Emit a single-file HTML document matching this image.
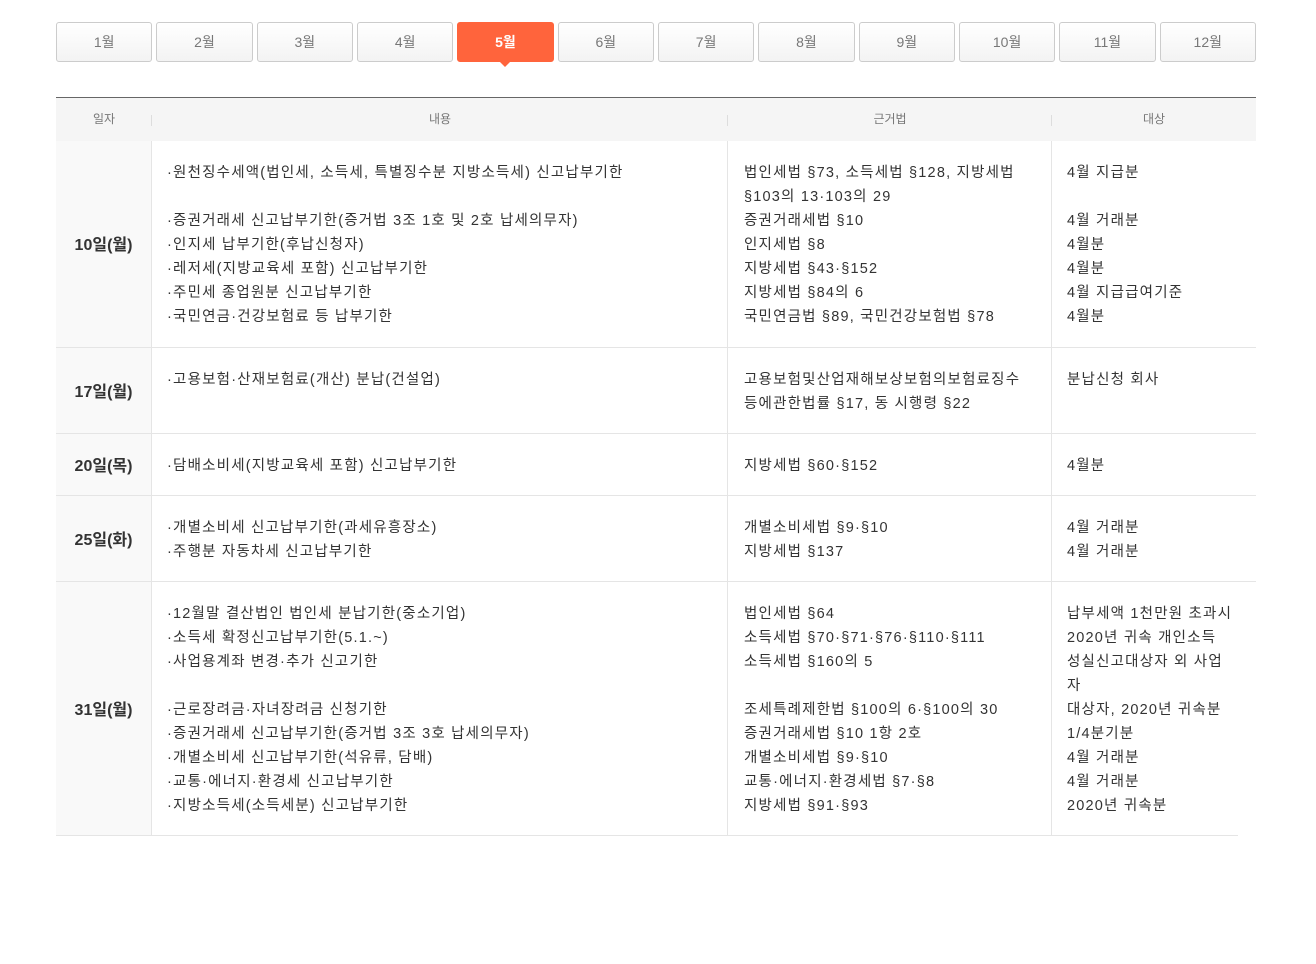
<!DOCTYPE html>
<html><head><meta charset="utf-8"><style>
body{margin:0;background:#fff;font-family:"Liberation Sans","Noto Sans CJK KR",sans-serif;color:#333;}
.tabs{position:absolute;left:56px;top:22px;width:1200px;display:flex;gap:4px;}
.tab{flex:1;border:1px solid #ccc;border-radius:3px;background:linear-gradient(#fff,#f3f3f3);box-sizing:border-box;height:40px;text-align:center;line-height:38px;font-size:14px;color:#777;position:relative;}
.tab.on{background:#ff643c;border-color:#ff643c;color:#fff;font-weight:bold;}
.tab.on:after{content:"";position:absolute;left:50%;margin-left:-6px;bottom:-6px;border-left:6px solid transparent;border-right:6px solid transparent;border-top:6px solid #ff643c;}
.tbl{position:absolute;left:56px;top:97px;width:1200px;border-top:1px solid #666;}
.hd{height:43px;background:#f5f5f5;position:relative;font-size:12px;color:#777;}
.hd div{position:absolute;top:0;line-height:43px;text-align:center;}
.hd i{position:absolute;top:17px;width:1px;height:11px;background:#ddd;}
.row{position:relative;border-bottom:1px solid #e5e5e5;box-sizing:border-box;}
.row>div{position:absolute;top:0;bottom:0;box-sizing:border-box;font-size:14.5px;letter-spacing:1.2px;line-height:24px;padding-top:20px;white-space:nowrap;}
.c1{left:0;width:96px;background:#f9f9f9;font-weight:bold;font-size:16px!important;letter-spacing:0!important;text-align:center;display:flex;align-items:center;justify-content:center;padding-top:4px!important;border-right:1px solid #e5e5e5;}
.c2{left:96px;width:576px;padding-left:15px;border-right:1px solid #e5e5e5;}
.c3{left:672px;width:324px;padding-left:16px;border-right:1px solid #e5e5e5;}
.c4{left:996px;width:204px;padding-left:15px;}
</style></head><body>
<div class="tabs">
<div class="tab">1월</div><div class="tab">2월</div><div class="tab">3월</div><div class="tab">4월</div><div class="tab on">5월</div><div class="tab">6월</div><div class="tab">7월</div><div class="tab">8월</div><div class="tab">9월</div><div class="tab">10월</div><div class="tab">11월</div><div class="tab">12월</div>
</div>
<div class="tbl">
<div class="hd"><div style="left:0;width:96px">일자</div><i style="left:95px"></i><div style="left:96px;width:576px">내용</div><i style="left:671px"></i><div style="left:672px;width:324px">근거법</div><i style="left:995px"></i><div style="left:996px;width:204px">대상</div></div>
<div class="row" style="height:207px">
<div class="c1">10일(월)</div>
<div class="c2">·원천징수세액(법인세, 소득세, 특별징수분 지방소득세) 신고납부기한<br><br>·증권거래세 신고납부기한(증거법 3조 1호 및 2호 납세의무자)<br>·인지세 납부기한(후납신청자)<br>·레저세(지방교육세 포함) 신고납부기한<br>·주민세 종업원분 신고납부기한<br>·국민연금·건강보험료 등 납부기한</div>
<div class="c3">법인세법 §73, 소득세법 §128, 지방세법<br>§103의 13·103의 29<br>증권거래세법 §10<br>인지세법 §8<br>지방세법 §43·§152<br>지방세법 §84의 6<br>국민연금법 §89, 국민건강보험법 §78</div>
<div class="c4">4월 지급분<br><br>4월 거래분<br>4월분<br>4월분<br>4월 지급급여기준<br>4월분</div>
</div>
<div class="row" style="height:86px">
<div class="c1">17일(월)</div>
<div class="c2">·고용보험·산재보험료(개산) 분납(건설업)</div>
<div class="c3">고용보험및산업재해보상보험의보험료징수<br>등에관한법률 §17, 동 시행령 §22</div>
<div class="c4">분납신청 회사</div>
</div>
<div class="row" style="height:62px">
<div class="c1">20일(목)</div>
<div class="c2">·담배소비세(지방교육세 포함) 신고납부기한</div>
<div class="c3">지방세법 §60·§152</div>
<div class="c4">4월분</div>
</div>
<div class="row" style="height:86px">
<div class="c1">25일(화)</div>
<div class="c2">·개별소비세 신고납부기한(과세유흥장소)<br>·주행분 자동차세 신고납부기한</div>
<div class="c3">개별소비세법 §9·§10<br>지방세법 §137</div>
<div class="c4">4월 거래분<br>4월 거래분</div>
</div>
<div class="row" style="height:254px;width:1182px">
<div class="c1">31일(월)</div>
<div class="c2">·12월말 결산법인 법인세 분납기한(중소기업)<br>·소득세 확정신고납부기한(5.1.~)<br>·사업용계좌 변경·추가 신고기한<br><br>·근로장려금·자녀장려금 신청기한<br>·증권거래세 신고납부기한(증거법 3조 3호 납세의무자)<br>·개별소비세 신고납부기한(석유류, 담배)<br>·교통·에너지·환경세 신고납부기한<br>·지방소득세(소득세분) 신고납부기한</div>
<div class="c3">법인세법 §64<br>소득세법 §70·§71·§76·§110·§111<br>소득세법 §160의 5<br><br>조세특례제한법 §100의 6·§100의 30<br>증권거래세법 §10 1항 2호<br>개별소비세법 §9·§10<br>교통·에너지·환경세법 §7·§8<br>지방세법 §91·§93</div>
<div class="c4" style="width:186px">납부세액 1천만원 초과시<br>2020년 귀속 개인소득<br>성실신고대상자 외 사업<br>자<br>대상자, 2020년 귀속분<br>1/4분기분<br>4월 거래분<br>4월 거래분<br>2020년 귀속분</div>
</div>
</div>
</body></html>
